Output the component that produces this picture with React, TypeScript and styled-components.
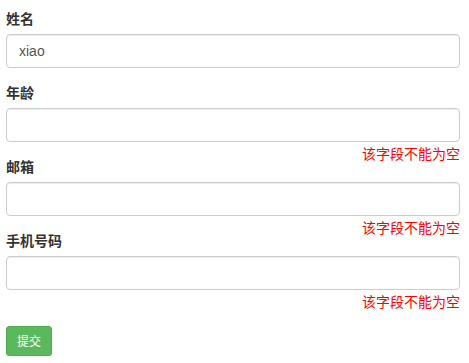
import React, { useState } from "react";
import styled, { createGlobalStyle } from "styled-components";

const GlobalStyle = createGlobalStyle`
  * {
    box-sizing: border-box;
  }
  body {
    margin: 0;
    background: #fff;
    font-family: "Liberation Sans", "Noto Sans CJK SC", Arial, sans-serif;
    font-size: 14px;
    line-height: 1.42857;
    color: #333;
  }
`;

export const Form = styled.form`
  padding: 9px 9px 0 6px;
`;

export const FormGroup = styled.div`
  margin-bottom: 15px;
`;

export const Label = styled.label`
  display: inline-block;
  margin-bottom: 5px;
  font-weight: bold;
  font-size: 14px;
  line-height: 20px;
  color: #333;
  font-family: "Liberation Sans", "Noto Sans CJK SC", sans-serif;
`;

export const Input = styled.input`
  display: block;
  width: 100%;
  height: 34px;
  padding: 6px 12px;
  font-size: 14px;
  line-height: 1.42857;
  color: #555;
  background-color: #fff;
  border: 1px solid #ccc;
  border-radius: 4px;
  box-shadow: inset 0 1px 1px rgba(0, 0, 0, 0.075);
  font-family: "Liberation Sans", "Noto Sans CJK SC", sans-serif;
  outline: none;
`;

export const ErrorText = styled.span`
  display: block;
  text-align: right;
  color: red;
  font-size: 14px;
  line-height: 20px;
  margin-top: 1px;
  margin-bottom: -21px;
  font-family: "Noto Sans CJK SC", sans-serif;
`;

export const SubmitButton = styled.button`
  display: inline-block;
  margin-top: 21px;
  padding: 5px 10px;
  font-size: 12px;
  line-height: 1.5;
  color: #fff;
  background-color: #5cb85c;
  border: 1px solid #4cae4c;
  border-radius: 3px;
  font-family: "Noto Sans CJK SC", sans-serif;
  cursor: pointer;
`;

const fields = [
  { key: "name", label: "姓名" },
  { key: "age", label: "年龄" },
  { key: "email", label: "邮箱" },
  { key: "phone", label: "手机号码" },
];

const App: React.FC = () => {
  const [values, setValues] = useState<Record<string, string>>({
    name: "xiao",
    age: "",
    email: "",
    phone: "",
  });

  const onSubmit = (e: React.FormEvent) => {
    e.preventDefault();
  };

  return (
    <>
      <GlobalStyle />
      <Form onSubmit={onSubmit}>
        {fields.map((f) => (
          <FormGroup key={f.key}>
            <Label>{f.label}</Label>
            <Input
              type="text"
              value={values[f.key]}
              onChange={(e) => setValues({ ...values, [f.key]: e.target.value })}
            />
            {values[f.key] === "" && <ErrorText>该字段不能为空</ErrorText>}
          </FormGroup>
        ))}
        <SubmitButton type="submit">提交</SubmitButton>
      </Form>
    </>
  );
};

export default App;
